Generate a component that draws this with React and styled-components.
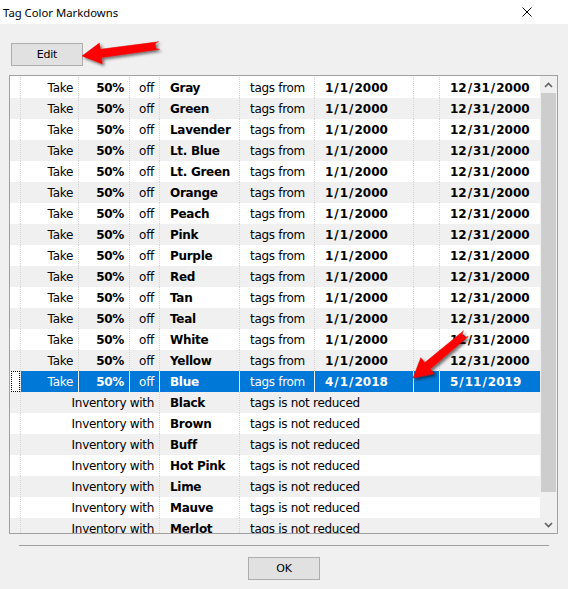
import React from "react";
import styled, { createGlobalStyle } from "styled-components";

const GlobalStyle = createGlobalStyle`
  html, body {
    margin: 0;
    padding: 0;
    background: #f0f0f0;
  }
  * {
    box-sizing: border-box;
  }
`;

const COLUMNS = "11px 58px 51px 30px 80px 75px 99px 26px 100px";

const markdowns = [
  "Gray",
  "Green",
  "Lavender",
  "Lt. Blue",
  "Lt. Green",
  "Orange",
  "Peach",
  "Pink",
  "Purple",
  "Red",
  "Tan",
  "Teal",
  "White",
  "Yellow",
].map((color) => ({ color, from: "1/1/2000", to: "12/31/2000" }));

markdowns.push({ color: "Blue", from: "4/1/2018", to: "5/11/2019", selected: true });

const notReduced = ["Black", "Brown", "Buff", "Hot Pink", "Lime", "Mauve", "Merlot"];

// arrow outline from tail to tip, with a round tail cap
const arrowPath = (tx, ty, hx, hy) => {
  const dx = hx - tx;
  const dy = hy - ty;
  const len = Math.hypot(dx, dy);
  const ux = dx / len;
  const uy = dy / len;
  const nx = -uy;
  const ny = ux;
  const headLen = 19;
  const headHalf = 10.5;
  const tailHalf = 3.7;
  const neckHalf = 4.2;
  const bx = hx - ux * headLen;
  const by = hy - uy * headLen;
  const p = (x, y) => `${x.toFixed(1)},${y.toFixed(1)}`;
  return [
    `M${p(tx + nx * tailHalf, ty + ny * tailHalf)}`,
    `L${p(bx + nx * neckHalf, by + ny * neckHalf)}`,
    `L${p(bx + nx * headHalf, by + ny * headHalf)}`,
    `L${p(hx, hy)}`,
    `L${p(bx - nx * headHalf, by - ny * headHalf)}`,
    `L${p(bx - nx * neckHalf, by - ny * neckHalf)}`,
    `L${p(tx - nx * tailHalf, ty - ny * tailHalf)}`,
    `A${tailHalf},${tailHalf} 0 0 1 ${p(tx + nx * tailHalf, ty + ny * tailHalf)}`,
    "Z",
  ].join(" ");
};

const DateText = ({ value }) => {
  const parts = value.split("/");
  return (
    <>
      {parts.map((part, i) => (
        <React.Fragment key={i}>
          {i > 0 && <Slash>/</Slash>}
          {part}
        </React.Fragment>
      ))}
    </>
  );
};

const App = () => {
  return (
    <>
      <GlobalStyle />
      <Page>
        <TitleBar>
          <Title>Tag Color Markdowns</Title>
          <CloseButton>
            <svg width="10" height="10" viewBox="0 0 10 10">
              <path d="M0.5 0.5 L9.5 9.5 M9.5 0.5 L0.5 9.5" stroke="#000" strokeWidth="1" fill="none" />
            </svg>
          </CloseButton>
        </TitleBar>

        <DialogBody>
          <Toolbar>
            <Button>Edit</Button>
          </Toolbar>

          <Grid>
            <Rows>
              {markdowns.map((m, i) => (
                <Row key={m.color} $index={i} $selected={m.selected}>
                  <RowHeader $selected={m.selected}>{m.selected && <FocusMark />}</RowHeader>
                  <Cell $align="right" $selected={m.selected}>Take</Cell>
                  <Cell $align="right" $bold $selected={m.selected}>50%</Cell>
                  <Cell $align="right" $selected={m.selected}>off</Cell>
                  <Cell $bold $selected={m.selected}>{m.color}</Cell>
                  <Cell $selected={m.selected}>tags from</Cell>
                  <DateCell $selected={m.selected}>
                    <DateText value={m.from} />
                  </DateCell>
                  <Cell $selected={m.selected} />
                  <DateCell $selected={m.selected} $last>
                    <DateText value={m.to} />
                  </DateCell>
                </Row>
              ))}
              {notReduced.map((color, i) => (
                <Row key={color} $index={markdowns.length + i}>
                  <RowHeader />
                  <Cell $align="right" $span={3}>Inventory with</Cell>
                  <Cell $bold>{color}</Cell>
                  <Cell $span={4} $last>tags is not reduced</Cell>
                </Row>
              ))}
            </Rows>

            <ScrollBar>
              <ScrollArrow>
                <svg width="9" height="6" viewBox="0 0 9 6">
                  <polyline points="1,5 4.5,1.5 8,5" stroke="#606060" strokeWidth="1.6" fill="none" />
                </svg>
              </ScrollArrow>
              <Track>
                <Thumb />
              </Track>
              <ScrollArrow>
                <svg width="9" height="6" viewBox="0 0 9 6">
                  <polyline points="1,1 4.5,4.5 8,1" stroke="#606060" strokeWidth="1.6" fill="none" />
                </svg>
              </ScrollArrow>
            </ScrollBar>
          </Grid>

          <Divider />

          <Footer>
            <Button>OK</Button>
          </Footer>
        </DialogBody>

        <Callouts width="568" height="589" viewBox="0 0 568 589">
          <defs>
            <filter id="calloutShadow" x="-20%" y="-20%" width="140%" height="140%">
              <feDropShadow dx="2" dy="2" stdDeviation="1.4" floodColor="#000" floodOpacity="0.55" />
            </filter>
          </defs>
          <g filter="url(#calloutShadow)" fill="#ff0000" stroke="#e00000" strokeWidth="0.5">
            <path d={arrowPath(159, 45.5, 82, 56)} />
            <path d={arrowPath(466, 333.5, 413, 378)} />
          </g>
        </Callouts>
      </Page>
    </>
  );
};

const Page = styled.div`
  position: relative;
  width: 568px;
  height: 589px;
  overflow: hidden;
  background: #f0f0f0;
  font-family: "DejaVu Sans", Verdana, sans-serif;
  color: #000;
`;

const TitleBar = styled.div`
  height: 24px;
  background: #fff;
  display: flex;
  align-items: center;
  justify-content: space-between;
  padding: 0 36px 0 3px;
`;

const Title = styled.div`
  font-family: "Noto Sans", "Open Sans", sans-serif;
  font-size: 11.3px;
  color: #000;
`;

const CloseButton = styled.div`
  display: flex;
  align-items: center;
  width: 10px;
  height: 10px;
`;

const DialogBody = styled.div`
  padding-top: 19px;
`;

const Toolbar = styled.div`
  padding-left: 11px;
  display: flex;
`;

const Button = styled.div`
  width: 72px;
  height: 23px;
  background: #e1e1e1;
  border: 1px solid #adadad;
  display: flex;
  align-items: center;
  justify-content: center;
  font-size: 11px;
  letter-spacing: -0.2px;
`;

const Grid = styled.div`
  margin: 9px 0 0 9px;
  width: 549px;
  height: 459px;
  border: 1px solid #a0a0a0;
  background: #fff;
  display: flex;
`;

const Rows = styled.div`
  width: 530px;
  padding-top: 1px;
  overflow: hidden;
`;

const Row = styled.div`
  display: grid;
  grid-template-columns: ${COLUMNS};
  height: 21px;
  background: ${(p) => (p.$selected ? "#0078d7" : p.$index % 2 ? "#f0f0f0" : "#fff")};
  color: ${(p) => (p.$selected ? "#fff" : "#000")};
`;

const RowHeader = styled.div`
  border-right: 1px dotted #d4d4d4;
  background: ${(p) => (p.$selected ? "#fff" : "transparent")};
  display: flex;
`;

const FocusMark = styled.div`
  flex: 1;
  margin: 0 0 0 1px;
  border: 1px dotted #000;
`;

const Cell = styled.div`
  grid-column: span ${(p) => p.$span || 1};
  display: flex;
  align-items: center;
  justify-content: ${(p) => (p.$align === "right" ? "flex-end" : "flex-start")};
  padding: ${(p) => (p.$align === "right" ? "0 5px 0 0" : "0 0 0 10px")};
  font-size: 12px;
  letter-spacing: -0.3px;
  font-weight: ${(p) => (p.$bold ? 700 : 400)};
  white-space: nowrap;
  border-right: ${(p) =>
    p.$last ? "none" : p.$selected ? "1px solid #e8f1fb" : "1px dotted #d4d4d4"};
`;

const DateCell = styled(Cell)`
  font-size: 12px;
  letter-spacing: 0;
  font-weight: 700;
`;

const Slash = styled.span`
  margin: 0 1px;
`;

const ScrollBar = styled.div`
  width: 17px;
  background: #f0f0f0;
  display: flex;
  flex-direction: column;
`;

const ScrollArrow = styled.div`
  height: 17px;
  display: flex;
  align-items: center;
  justify-content: center;
`;

const Track = styled.div`
  flex: 1;
  padding: 0 1px;
`;

const Thumb = styled.div`
  height: 399px;
  background: #cdcdcd;
`;

const Divider = styled.div`
  margin: 11px 0 0 19px;
  width: 530px;
  border-top: 1px solid #a0a0a0;
`;

const Footer = styled.div`
  margin-top: 11px;
  display: flex;
  justify-content: center;
`;

const Callouts = styled.svg`
  position: absolute;
  left: 0;
  top: 0;
  pointer-events: none;
`;

export default App;
